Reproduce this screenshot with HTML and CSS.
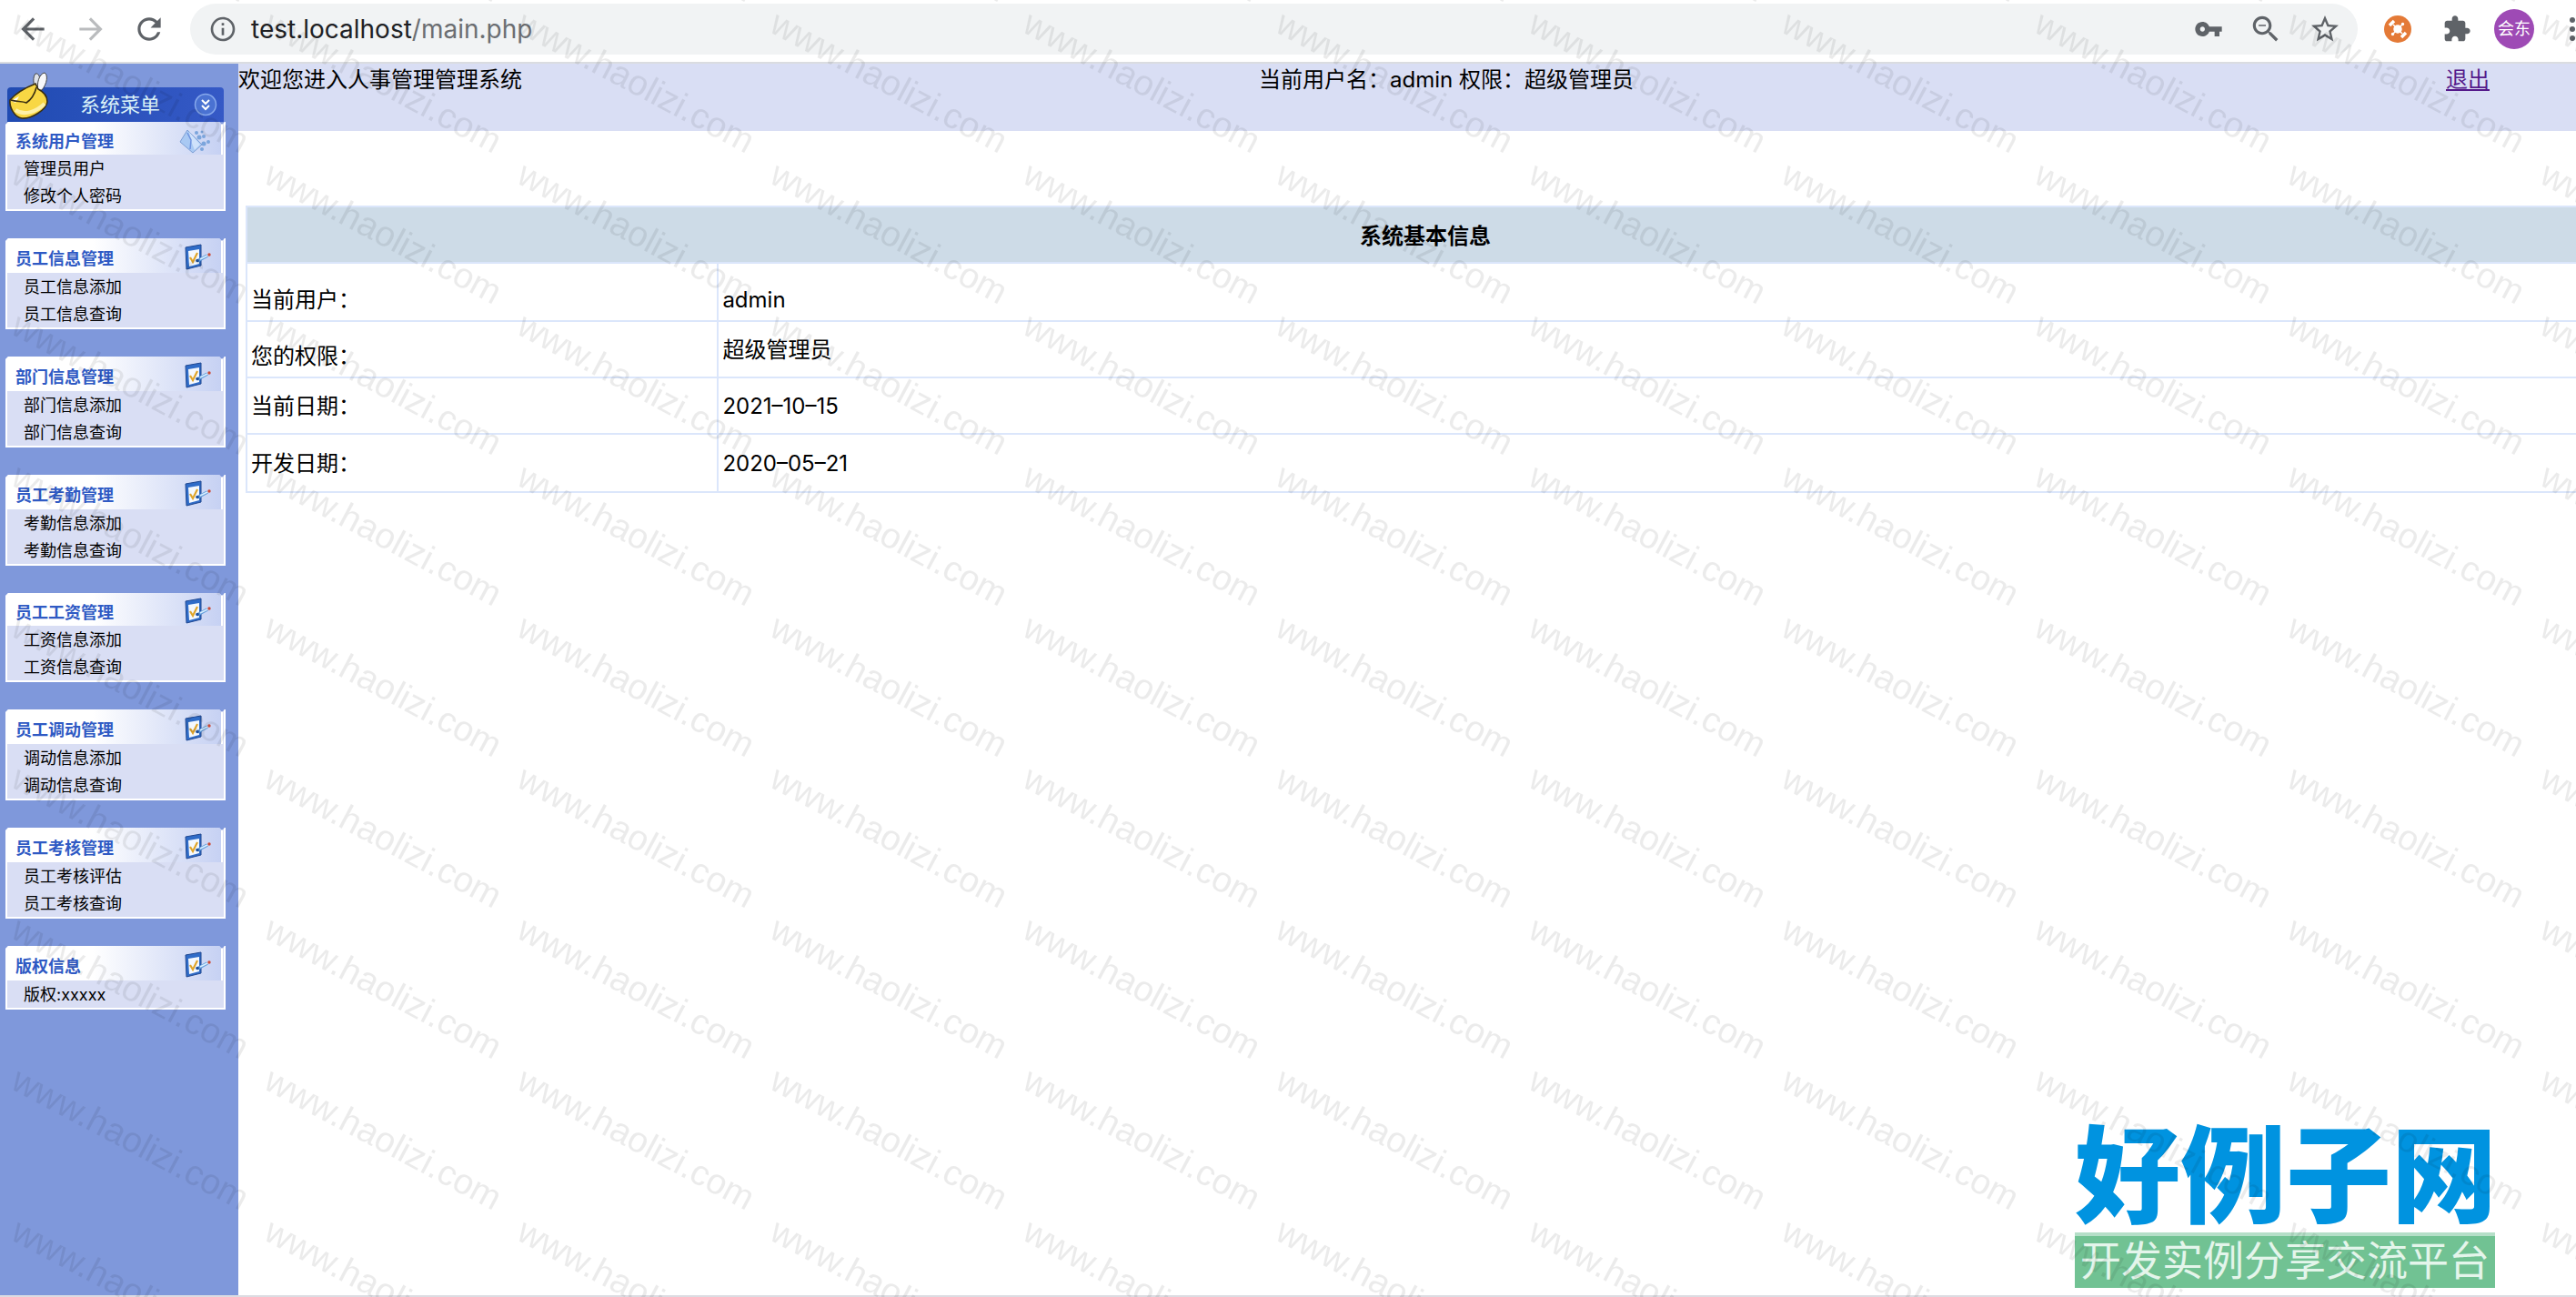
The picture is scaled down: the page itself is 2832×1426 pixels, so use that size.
FILE: index.html
```html
<!DOCTYPE html>
<html lang="zh-CN">
<head>
  <meta charset="UTF-8">
  <title>人事管理系统</title>
  <link rel="stylesheet" href="styles.css">
</head>

<body>
  <!-- shared icons -->
  <svg class="sprite" width="0" height="0" aria-hidden="true">
    <symbol id="note" viewBox="0 0 30 30">
      <path d="M2 4 L19 1 V24 L3 28 Z" fill="#2f6cc8" stroke="#1f4790" stroke-width="1"/>
      <path d="M5 8 L17 6 V22 L6 25 Z" fill="#f4f9ff"/>
      <path d="M7 15 L10 20 L15 10" fill="none" stroke="#dfa52c" stroke-width="2.2"/>
      <path d="M15 19 L26 13" stroke="#5e9ad8" stroke-width="3.6"/>
      <path d="M18 17 L26 13" stroke="#d9efff" stroke-width="1.6"/>
      <circle cx="15" cy="18.500" r="1.800" fill="#1f4f9c"/>
      <circle cx="28" cy="12" r="1.700" fill="#cc4a34"/>
    </symbol>
  </svg>

  <div class="browser-bar">
    <button class="icon-btn back" type="button" aria-label="后退">
      <svg viewBox="0 0 24 24"><path d="M20 11H7.830l5.590-5.590L12 4l-8 8 8 8 1.410-1.410L7.830 13H20v-2z"/></svg>
    </button>
    <button class="icon-btn forward" type="button" aria-label="前进">
      <svg viewBox="0 0 24 24"><path d="M12 4l-1.410 1.410L16.170 11H4v2h12.170l-5.580 5.590L12 20l8-8z"/></svg>
    </button>
    <button class="icon-btn" type="button" aria-label="刷新">
      <svg viewBox="0 0 24 24"><path d="M17.650 6.350C16.200 4.900 14.210 4 12 4c-4.420 0-7.990 3.580-7.990 8s3.570 8 7.990 8c3.730 0 6.840-2.550 7.730-6h-2.080c-.82 2.330-3.040 4-5.650 4-3.310 0-6-2.690-6-6s2.690-6 6-6c1.660 0 3.140.69 4.220 1.780L13 11h7V4l-2.350 2.350z"/></svg>
    </button>
    <div class="address">
      <svg class="info" viewBox="0 0 24 24"><path d="M11 17h2v-6h-2v6zm1-15C6.480 2 2 6.480 2 12s4.480 10 10 10 10-4.480 10-10S17.520 2 12 2zm0 18c-4.410 0-8-3.590-8-8s3.590-8 8-8 8 3.590 8 8-3.590 8-8 8zM11 9h2V7h-2v2z"/></svg>
      <span class="url">test.localhost<span class="path">/main.php</span></span>
      <svg class="key" viewBox="0 0 24 24"><path d="M12.650 10C11.830 7.670 9.610 6 7 6c-3.310 0-6 2.690-6 6s2.690 6 6 6c2.610 0 4.830-1.670 5.650-4H17v4h4v-4h2v-4H12.650zM7 14c-1.100 0-2-.9-2-2s.9-2 2-2 2 .9 2 2-.9 2-2 2z"/></svg>
      <svg class="lens" viewBox="0 0 24 24"><path d="M15.500 14h-.79l-.28-.27C15.410 12.590 16 11.110 16 9.500 16 5.910 13.090 3 9.500 3S3 5.910 3 9.500 5.910 16 9.500 16c1.610 0 3.090-.59 4.230-1.570l.27.28v.79l5 4.990L20.490 19l-4.990-5zm-6 0C7.010 14 5 11.990 5 9.500S7.010 5 9.500 5 14 7.010 14 9.500 11.990 14 9.500 14zM7 9h5v1H7z"/></svg>
      <svg class="star" viewBox="0 0 24 24"><path d="M22 9.240l-7.190-.62L12 2 9.190 8.630 2 9.240l5.460 4.730L5.820 21 12 17.270 18.180 21l-1.630-7.030L22 9.240zM12 15.400l-3.760 2.270 1-4.280-3.320-2.880 4.380-.38L12 6.100l1.710 4.040 4.380.38-3.320 2.880 1 4.280L12 15.400z"/></svg>
    </div>
    <svg class="ext" viewBox="0 0 30 30">
      <circle cx="15" cy="15" r="15" fill="#e47a37"/>
      <g stroke="#fff" stroke-width="1.5" fill="#fff">
        <path d="M10 10 L20 20 M20 10 L10 20"/>
        <circle cx="15" cy="15" r="4"/>
        <circle cx="20.500" cy="9.500" r="1"/><circle cx="9.500" cy="20.500" r="1"/>
        <path d="M6 11 L11 6 M19 24 L24 19" stroke-width="3.500"/>
      </g>
    </svg>
    <svg class="puzzle" viewBox="0 0 24 24"><path d="M20.500 11H19V7c0-1.100-.9-2-2-2h-4V3.500C13 2.120 11.880 1 10.500 1S8 2.120 8 3.500V5H4c-1.100 0-1.990.9-1.990 2v3.800H3.500c1.490 0 2.700 1.210 2.700 2.700s-1.210 2.700-2.700 2.700H2V20c0 1.100.9 2 2 2h3.800v-1.500c0-1.490 1.210-2.700 2.700-2.700 1.490 0 2.700 1.210 2.700 2.700V22H17c1.100 0 2-.9 2-2v-4h1.500c1.380 0 2.500-1.120 2.500-2.500S21.880 11 20.500 11z"/></svg>
    <span class="avatar">会东</span>
    <svg class="dots" viewBox="0 0 6 28"><circle cx="3" cy="4" r="3"/><circle cx="3" cy="14" r="3"/><circle cx="3" cy="24" r="3"/></svg>
  </div>

  <div class="frame">
    <div class="sidebar">
      <div class="menu-title">
        <svg class="mail" viewBox="0 0 44 54">
          <path d="M31 21 C27 15 27 6 30 3 C34 2 36 8 35 18 Z" fill="#dfe3ea" stroke="#444" stroke-width="1"/>
          <path d="M33 21 C31 14 34 3 40 2 C44 4 43 14 37 21 Z" fill="#f7f8fa" stroke="#444" stroke-width="1"/>
          <path d="M2 32 C8 25 20 18 30 14 L33 20 C39 23 43 27 43 34 C42 43 25 53 15 52 C7 51 1 40 2 32 Z" fill="#f8d744" stroke="#3a2f12" stroke-width="1.600"/>
          <path d="M4 33 C8 30 10 29 12 28 L8 35 Z" fill="#fff"/>
          <path d="M8 43 C18 50 32 44 40 36" fill="none" stroke="#fdf0a8" stroke-width="4"/>
          <path d="M3 32 C9 34 15 33 20 35 C26 31 29 26 31 18" fill="none" stroke="#3a2f12" stroke-width="1.600"/>
        </svg>
        <span>系统菜单</span>
        <svg class="toggle" viewBox="0 0 26 26">
          <circle cx="13" cy="13" r="11.500" fill="#4a72d2" stroke="#86a8ec" stroke-width="1.500"/>
          <path d="M9 8 L13 12 L17 8 M9 14 L13 18 L17 14" fill="none" stroke="#fff" stroke-width="2"/>
        </svg>
      </div>

      <div class="menu short">
        <h2>系统用户管理
          <svg class="users" viewBox="0 0 36 30">
            <path d="M2 17 L10 4 L26 20 L16 29 Z" fill="#a9c9f3" stroke="#7d9fd4"/>
            <path d="M12 6 L24 20 L18 26 L14 16 Z" fill="#cfe2fb"/>
            <path d="M10 7 L14 15 L13 25" fill="none" stroke="#6f94e0" stroke-width="1.500"/>
            <g fill="#7ba5dc"><circle cx="20" cy="7" r="2"/><circle cx="26" cy="6" r="1.500"/><circle cx="28" cy="11" r="2"/><circle cx="23" cy="12" r="2.500"/><circle cx="33" cy="17" r="2"/><circle cx="28" cy="19" r="2.500"/><circle cx="26" cy="25" r="2"/></g>
          </svg>
        </h2>
        <ul>
          <li><a href="#">管理员用户</a></li>
          <li><a href="#">修改个人密码</a></li>
        </ul>
      </div>
      <div class="menu">
        <h2>员工信息管理 <svg><use href="#note"/></svg></h2>
        <ul>
          <li><a href="#">员工信息添加</a></li>
          <li><a href="#">员工信息查询</a></li>
        </ul>
      </div>
      <div class="menu">
        <h2>部门信息管理 <svg><use href="#note"/></svg></h2>
        <ul>
          <li><a href="#">部门信息添加</a></li>
          <li><a href="#">部门信息查询</a></li>
        </ul>
      </div>
      <div class="menu">
        <h2>员工考勤管理 <svg><use href="#note"/></svg></h2>
        <ul>
          <li><a href="#">考勤信息添加</a></li>
          <li><a href="#">考勤信息查询</a></li>
        </ul>
      </div>
      <div class="menu short">
        <h2>员工工资管理 <svg><use href="#note"/></svg></h2>
        <ul>
          <li><a href="#">工资信息添加</a></li>
          <li><a href="#">工资信息查询</a></li>
        </ul>
      </div>
      <div class="menu">
        <h2>员工调动管理 <svg><use href="#note"/></svg></h2>
        <ul>
          <li><a href="#">调动信息添加</a></li>
          <li><a href="#">调动信息查询</a></li>
        </ul>
      </div>
      <div class="menu">
        <h2>员工考核管理 <svg><use href="#note"/></svg></h2>
        <ul>
          <li><a href="#">员工考核评估</a></li>
          <li><a href="#">员工考核查询</a></li>
        </ul>
      </div>
      <div class="menu">
        <h2>版权信息 <svg><use href="#note"/></svg></h2>
        <ul>
          <li>版权:xxxxx</li>
        </ul>
      </div>
    </div>

    <div class="main">
      <div class="header">
        <div class="welcome">欢迎您进入人事管理管理系统</div>
        <div class="user">当前用户名：admin 权限：超级管理员</div>
        <a class="logout" href="#">退出</a>
      </div>

      <div class="content">
        <table>
          <colgroup>
            <col class="label-col">
            <col>
          </colgroup>
          <thead>
            <tr><th colspan="2">系统基本信息</th></tr>
          </thead>
          <tbody>
            <tr class="tall">
              <td class="low">当前用户：</td>
              <td class="low">admin</td>
            </tr>
            <tr>
              <td class="low">您的权限：</td>
              <td>超级管理员</td>
            </tr>
            <tr>
              <td>当前日期：</td>
              <td>2021–10–15</td>
            </tr>
            <tr class="tall">
              <td>开发日期：</td>
              <td>2020–05–21</td>
            </tr>
          </tbody>
        </table>
      </div>
    </div>
  </div>

  <div class="site-logo">
    <div class="site-name">好例子网</div>
    <div class="site-slogan">开发实例分享交流平台</div>
  </div>

  <svg class="watermark" aria-hidden="true">
    <defs>
      <pattern id="wm" y="8" width="278" height="166" patternUnits="userSpaceOnUse">
        <text transform="translate(10 26) rotate(28)">www.haolizi.com</text>
      </pattern>
    </defs>
    <rect width="100%" height="100%" fill="url(#wm)"/>
  </svg>
</body>
</html>
```
FILE: styles.css
```css
* {
  box-sizing: border-box;
}

body {
  font-family: Inter, 'Noto Sans CJK SC', sans-serif;
  font-size: 24px;
  line-height: 36px;
  color: #000;
  background-color: #fff;
  margin: 0;
  min-height: 100vh;
  display: flex;
  flex-direction: column;
  position: relative;
  overflow: hidden;
}

.sprite {
  position: absolute;
}

/* Browser toolbar */
.browser-bar {
  display: flex;
  align-items: center;
  height: 70px;
  padding: 0 1px 4px 17px;
  border-bottom: 2px solid #dadce0;
}

.browser-bar svg {
  flex: none;
  width: 38px;
  height: 38px;
  fill: #5f6368;
}

.icon-btn {
  flex: none;
  display: flex;
  width: 38px;
  margin-right: 26px;
  padding: 0;
  border: none;
  background: none;
}

.browser-bar .forward svg {
  fill: #babcbe;
}

.address {
  flex: 1;
  display: flex;
  align-items: center;
  height: 56px;
  margin-right: 29px;
  padding: 0 18px 0 20px;
  border-radius: 28px;
  background-color: #f1f3f4;
}

.address svg {
  margin-left: 28px;
}

.address .info {
  width: 32px;
  height: 32px;
  margin-left: 0;
}

.address .key {
  width: 32px;
  height: 32px;
}

.address .star {
  width: 36px;
  height: 36px;
}

.url {
  flex: 1;
  margin-left: 15px;
  font-size: 28px;
  color: #202124;
}

.path {
  color: #6b6e72;
}

.browser-bar .ext {
  width: 30px;
  height: 30px;
}

.browser-bar .puzzle {
  width: 32px;
  height: 32px;
  margin-left: 34px;
}

.avatar {
  flex: none;
  width: 44px;
  height: 44px;
  margin-left: 25px;
  border-radius: 50%;
  background-color: #9e4ab5;
  color: #fff;
  font-size: 18px;
  line-height: 44px;
  text-align: center;
}

.browser-bar .dots {
  width: 6px;
  height: 28px;
  margin-left: 39px;
}

/* Layout */
.frame {
  flex: 1;
  display: flex;
  border-bottom: 2px solid #dcdce2;
}

.sidebar {
  flex: none;
  width: 262px;
  padding: 26px 14px 0 6px;
  background-color: #7f98db;
}

.menu-title {
  position: relative;
  display: flex;
  align-items: center;
  justify-content: space-between;
  height: 38px;
  margin: 0 2px;
  padding: 0 7px 0 80px;
  border-radius: 4px 4px 0 0;
  background: linear-gradient(to right, #204bb2, #3559c6);
  color: #d9f1f8;
  font-size: 22px;
}

.mail {
  position: absolute;
  left: 1px;
  bottom: 2px;
  width: 44px;
  height: 54px;
}

.toggle {
  width: 26px;
  height: 26px;
}

.menu {
  margin-bottom: 30px;
  border: 2px solid #fff;
  border-top: none;
  background-color: #d9def4;
  clip-path: polygon(0 3px, 3px 0, 235px 0, 238px 3px, 241px 0, 100% 0, 100% 100%, 0 100%);
}

.menu h2 {
  display: flex;
  align-items: center;
  justify-content: space-between;
  height: 38px;
  margin: 0 1px 0 0;
  padding: 8px 11px 0 9px;
  border-right: 2px solid #fff;
  background: linear-gradient(to right, #fff 40%, #c6d1f3);
  color: #2f5ac4;
  font-size: 18px;
  line-height: 28px;
}

.menu.short h2 {
  height: 36px;
}

.menu h2 svg {
  width: 30px;
  height: 30px;
  margin-top: -4px;
}

.menu h2 .users {
  width: 36px;
}

.menu ul {
  list-style: none;
  margin: 0;
  padding: 1px 0 0 18px;
  font-size: 18px;
  line-height: 30px;
}

.menu li {
  height: 30px;
}

.menu li:last-child {
  height: 29px;
}

.menu a {
  color: #000;
  text-decoration: none;
}

.main {
  flex: 1;
  min-width: 0;
  overflow: hidden;
}

.header {
  display: grid;
  grid-template-columns: 1122px 1fr auto;
  height: 74px;
  padding-right: 95px;
  background-color: #d9def4;
}

.logout {
  color: #551a8b;
}

.content {
  padding: 82px 0 0 8px;
}

/* the table runs a little past the right edge of the frame */
table {
  width: calc(100% + 32px);
  border-collapse: collapse;
  table-layout: fixed;
}

.label-col {
  width: 20%;
}

th {
  height: 62px;
  padding: 3px 0 0;
  border: 2px solid #dbe6fb;
  background-color: #cddbe7;
}

td {
  height: 62px;
  padding: 2px 4px 0;
  border: 2px solid #dbe6fb;
}

.tall td {
  height: 64px;
}

td.low {
  vertical-align: bottom;
  padding-bottom: 4px;
}

/* Logo in the corner */
.site-logo {
  position: absolute;
  right: 89px;
  bottom: 10px;
  width: 462px;
}

.site-name {
  color: #0093e0;
  font-size: 116px;
  font-weight: 900;
  line-height: 124px;
  white-space: nowrap;
}

.site-slogan {
  height: 61px;
  border-top: 4px solid #b5dfc8;
  background-color: #71c293;
  color: #e4f5eb;
  font-size: 45px;
  line-height: 56px;
  text-align: center;
  white-space: nowrap;
}

.watermark {
  position: absolute;
  left: 0;
  top: 0;
  width: 100%;
  height: 100%;
  pointer-events: none;
}

.watermark text {
  font-family: 'Liberation Sans', sans-serif;
  font-size: 39px;
  fill: #000;
  fill-opacity: 0.08;
}
```
